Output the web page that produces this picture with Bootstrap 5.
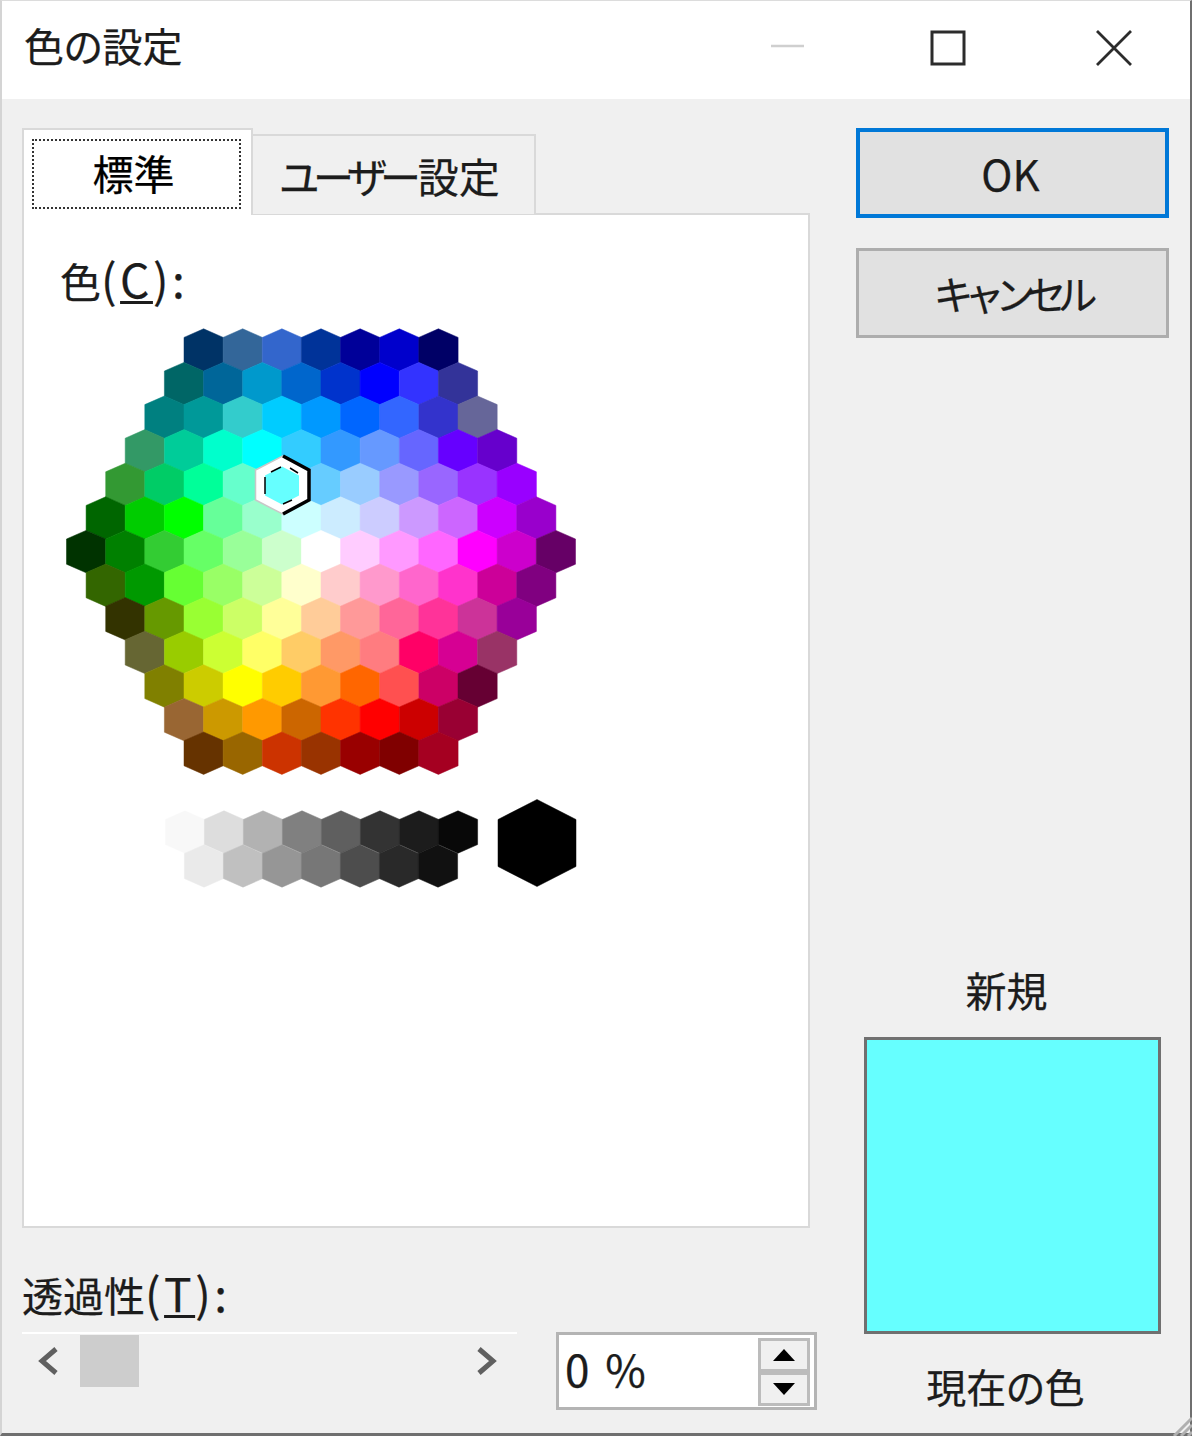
<!-- index.html -->
<!DOCTYPE html>
<html lang="ja">
<head>
  <meta charset="UTF-8">
  <title>色の設定</title>
  <meta name="viewport" content="width=device-width, initial-scale=1.0"/>
  <link href="https://cdn.jsdelivr.net/npm/bootstrap@5.3.0/dist/css/bootstrap.min.css" rel="stylesheet">
  <style>
    html, body { height: 100%; }
    body {
      margin: 0;
      background: #fff;
      color: #1c1c1c;
      font-family: "Noto Sans CJK JP", "Liberation Sans", sans-serif;
      font-size: 41px;
      font-feature-settings: "palt";
      -webkit-text-stroke: 0.25px;
      overflow: hidden;
    }
    .dlg-window {
      position: relative;
      width: 1192px;
      height: 1436px;
      background: #f0f0f0;
      border-top: 1px solid #dcdcdc;
      border-left: 2px solid #d4d4d4;
      border-right: 2px solid #6f6f6f;
      border-bottom: 3px solid #6f6f6f;
    }
    .dlg-title {
      height: 98px;
      background: #fff;
      padding: 0 57px 5px 22px;
      font-size: 40px;
      line-height: 1.2;
    }
    .dlg-title-text { margin-bottom: 5px; }
    .dlg-controls svg { display: block; }
    .ctl-max { margin-left: 124px; }
    .ctl-close { margin-left: 128px; }
    .dlg-main { padding: 29px 21px 0 20px; }
    .dlg-left { width: 797px; }
    .dlg-right { width: 313px; margin-left: 39px; height: 1283px; }
    .tab-row { height: 86px; border-bottom: 0; flex-wrap: nowrap; }
    .tab-row .nav-link {
      color: #1c1c1c;
      font-size: 41px;
      line-height: 1;
      border-radius: 0;
    }
    .tab-first {
      width: 231px;
      height: 87px;
      padding: 9px 10px 9px 8px;
      background: #fff !important;
      border: 2px solid #d9d9d9 !important;
      border-bottom: 0 !important;
      position: relative;
      z-index: 2;
    }
    .tab-focus {
      height: 70px;
      border: 2px dotted #333;
      text-align: center;
      line-height: 62px;
      padding-right: 6px;
    }
    .tab-second {
      width: 283px;
      height: 80px;
      margin-top: 6px;
      padding: 0 8px 0 0;
      text-align: center;
      line-height: 78px !important;
      background: #f0f0f0 !important;
      border: 2px solid #d9d9d9 !important;
      border-left: 0 !important;
      border-bottom: 0 !important;
    }
    .kana-tight { letter-spacing: -6px; margin-right: 3px; }
    .lat-text { font-size: 46px; line-height: 1; letter-spacing: 3.5px; }
    .tab-panel {
      width: 788px;
      height: 1015px;
      margin-top: -1px;
      background: #fff;
      border: 2px solid #d9d9d9;
      padding: 40px 0 0 36px;
    }
    .tab-panel label { display: block; line-height: 50px; height: 50px; }
    .cell-map { display: block; margin-top: 15px; }
    .trans-label { margin-top: 38px; line-height: 56px; height: 66px; }
    .slider-box { width: 495px; height: 60px; border-top: 2px solid #fff; }
    .slider-arrow { width: 58px; }
    .slider-thumb { width: 59px; height: 52px; background: #cdcdcd; margin-top: 1px; }
    .spin-box {
      width: 261px;
      height: 78px;
      margin-left: 39px;
      background: #fff;
      border: 3px solid #b4b4b4;
      padding-left: 6px;
      font-size: 44px;
      line-height: 66px;
      word-spacing: 6px;
    }
    .spin-btn {
      width: 52px;
      height: 34px;
      background: #f0f0f0;
      border: 3px solid #bcbcbc;
    }
    .spin-col { width: 52px; margin: 3px 4px 0 0; }
    .dlg-btn {
      width: 313px;
      height: 90px;
      padding: 0 4px 0 0;
      background: #e1e1e1;
      color: #1c1c1c;
      font-size: 42px;
      line-height: 1;
      border-radius: 0;
      border: 3px solid #adadad;
    }
    .dlg-btn-main { border: 4px solid #0078d7; }
    .dlg-btn + .dlg-btn { margin-top: 30px; }
    .dlg-btn-kana { font-size: 40px; letter-spacing: -9px; padding-right: 3px; }
    .swatch-new {
      width: 297px;
      height: 297px;
      margin-left: 8px;
      background: #66ffff;
      border: 3px solid #707070;
    }
    .swatch-label { text-align: center; line-height: 50px; font-size: 41px; }
    .swatch-top { margin-bottom: 23px; padding-right: 12px; }
    .swatch-bottom { margin-top: 27px; padding-right: 14px; font-size: 40px; }
    .grip-mark { position: absolute; right: -2px; bottom: -3px; }
    u { text-underline-offset: 3px; text-decoration-thickness: 3px; }
  </style>
</head>
<body>
  <div class="dlg-window d-flex flex-column">
    <div class="dlg-title d-flex align-items-center justify-content-between">
      <span class="dlg-title-text">色の設定</span>
      <div class="dlg-controls d-flex align-items-center">
        <svg width="36" height="8" viewBox="0 0 36 8"><line x1="2" y1="2" x2="35" y2="2" stroke="#cfcfcf" stroke-width="2.5"/></svg>
        <svg class="ctl-max" width="38" height="38" viewBox="0 0 38 38"><rect x="3" y="3" width="32" height="32" fill="none" stroke="#2c2c2c" stroke-width="3"/></svg>
        <svg class="ctl-close" width="38" height="38" viewBox="0 0 38 38"><path d="M2 2L36 36M36 2L2 36" fill="none" stroke="#2c2c2c" stroke-width="2.8"/></svg>
      </div>
    </div>

    <div class="dlg-main d-flex">
      <div class="dlg-left">
        <ul class="nav nav-tabs tab-row">
          <li class="nav-item"><a class="nav-link active tab-first" href="#"><div class="tab-focus">標準</div></a></li>
          <li class="nav-item"><a class="nav-link tab-second" href="#"><span class="kana-tight">ユーザー</span>設定</a></li>
        </ul>
        <div class="tab-panel">
          <label>色<span class="lat-text">(<u>C</u>):</span></label>
          <svg id="cellMap" class="cell-map" width="530" height="580" viewBox="60 320 530 580"></svg>
        </div>
        <div class="trans-label">透過性<span class="lat-text">(<u>T</u>):</span></div>
        <div class="d-flex">
          <div class="slider-box d-flex">
            <div class="slider-arrow d-flex align-items-center justify-content-center pb-1 pe-1">
              <svg width="26" height="32" viewBox="0 0 26 32"><path d="M20 4L6 16L20 28" fill="none" stroke="#606060" stroke-width="5"/></svg>
            </div>
            <div class="slider-thumb"></div>
            <div class="flex-grow-1"></div>
            <div class="slider-arrow d-flex align-items-center justify-content-center pb-1 pe-1">
              <svg width="26" height="32" viewBox="0 0 26 32"><path d="M6 4L20 16L6 28" fill="none" stroke="#606060" stroke-width="5"/></svg>
            </div>
          </div>
          <div class="spin-box d-flex justify-content-between">
            <span>0 %</span>
            <div class="spin-col d-flex flex-column">
              <div class="spin-btn d-flex align-items-center justify-content-center">
                <svg width="22" height="12" viewBox="0 0 22 12"><path d="M11 0L22 12H0Z" fill="#000"/></svg>
              </div>
              <div class="spin-btn d-flex align-items-center justify-content-center">
                <svg width="22" height="12" viewBox="0 0 22 12"><path d="M0 0H22L11 12Z" fill="#000"/></svg>
              </div>
            </div>
          </div>
        </div>
      </div>

      <div class="dlg-right d-flex flex-column">
        <button class="btn dlg-btn dlg-btn-main">OK</button>
        <button class="btn dlg-btn dlg-btn-kana">キャンセル</button>
        <div class="swatch-label swatch-top mt-auto">新規</div>
        <div class="swatch-new"></div>
        <div class="swatch-label swatch-bottom">現在の色</div>
      </div>
    </div>

    <svg class="grip-mark" width="24" height="24" viewBox="0 0 24 24">
      <path d="M6 24L24 6M13 24L24 13M20 24L24 20" stroke="#b0b0b0" stroke-width="3" fill="none"/>
    </svg>
  </div>

  <script>
    const rows = [
      ['003366','336699','3366CC','003399','000099','0000CC','000066'],
      ['006666','006699','0099CC','0066CC','0033CC','0000FF','3333FF','333399'],
      ['008080','009999','33CCCC','00CCFF','0099FF','0066FF','3366FF','3333CC','666699'],
      ['339966','00CC99','00FFCC','00FFFF','33CCFF','3399FF','6699FF','6666FF','6600FF','6600CC'],
      ['339933','00CC66','00FF99','66FFCC','66FFFF','66CCFF','99CCFF','9999FF','9966FF','9933FF','9900FF'],
      ['006600','00CC00','00FF00','66FF99','99FFCC','CCFFFF','CCECFF','CCCCFF','CC99FF','CC66FF','CC00FF','9900CC'],
      ['003300','008000','33CC33','66FF66','99FF99','CCFFCC','FFFFFF','FFCCFF','FF99FF','FF66FF','FF00FF','CC00CC','660066'],
      ['336600','009900','66FF33','99FF66','CCFF99','FFFFCC','FFCCCC','FF99CC','FF66CC','FF33CC','CC0099','800080'],
      ['333300','669900','99FF33','CCFF66','FFFF99','FFCC99','FF9999','FF6699','FF3399','CC3399','990099'],
      ['666633','99CC00','CCFF33','FFFF66','FFCC66','FF9966','FF7C80','FF0066','D60093','993366'],
      ['808000','CCCC00','FFFF00','FFCC00','FF9933','FF6600','FF5050','CC0066','660033'],
      ['996633','CC9900','FF9900','CC6600','FF3300','FF0000','CC0000','990033'],
      ['663300','996600','CC3300','993300','990000','800000','A50021']
    ];
    const grays = [
      ['F8F8F8','DDDDDD','B2B2B2','808080','5F5F5F','333333','1C1C1C','080808'],
      ['EAEAEA','C0C0C0','969696','777777','4D4D4D','292929','111111']
    ];

    const map = document.getElementById('cellMap');
    const STEP_X = 39.15, STEP_Y = 33.6;

    // hexagon, w = half width, h = half height, s = height of the slanted part
    function hexPoints(cx, cy, w, h, s) {
      return [[cx, cy - h], [cx + w, cy - h + s], [cx + w, cy + h - s],
              [cx, cy + h], [cx - w, cy + h - s], [cx - w, cy - h + s]]
        .map(p => p[0].toFixed(1) + ',' + p[1].toFixed(1)).join(' ');
    }

    let svg = '';
    const cell = (x, y, c, w = 19.6, h = 21.2, s = 8.6) =>
      `<polygon points="${hexPoints(x, y, w, h, s)}" fill="#${c}" stroke="#${c}" stroke-width="0.5"/>`;

    rows.forEach((row, i) => {
      row.forEach((c, j) => {
        svg += cell(321 - (row.length - 1) / 2 * STEP_X + j * STEP_X, 350 + i * STEP_Y, c);
      });
    });
    grays.forEach((row, i) => {
      row.forEach((c, j) => {
        svg += cell(185 + i * 19 + j * 39, 832 + i * 34, c);
      });
    });
    svg += cell(537, 843, '000000', 39, 43.5, 20);

    // selected cell marker
    svg += `<polygon points="${hexPoints(282.5, 485, 27, 29, 14)}" fill="#fff" stroke="#c8c8c8" stroke-width="1.5"/>`;
    svg += `<polygon points="${hexPoints(282, 485.5, 17, 19, 9)}" fill="#66FFFF"/>`;
    svg += `<polyline points="283,456 309,470 309,500 283,514" fill="none" stroke="#000" stroke-width="3.5"/>`;
    svg += `<path d="M265 477V494M271 472L281 467M290 468L298 473M283 504L292 500" fill="none" stroke="#000" stroke-width="1.5"/>`;
    map.innerHTML = svg;
  </script>
  <script src="https://cdn.jsdelivr.net/npm/bootstrap@5.3.0/dist/js/bootstrap.bundle.min.js"></script>
</body>
</html>
